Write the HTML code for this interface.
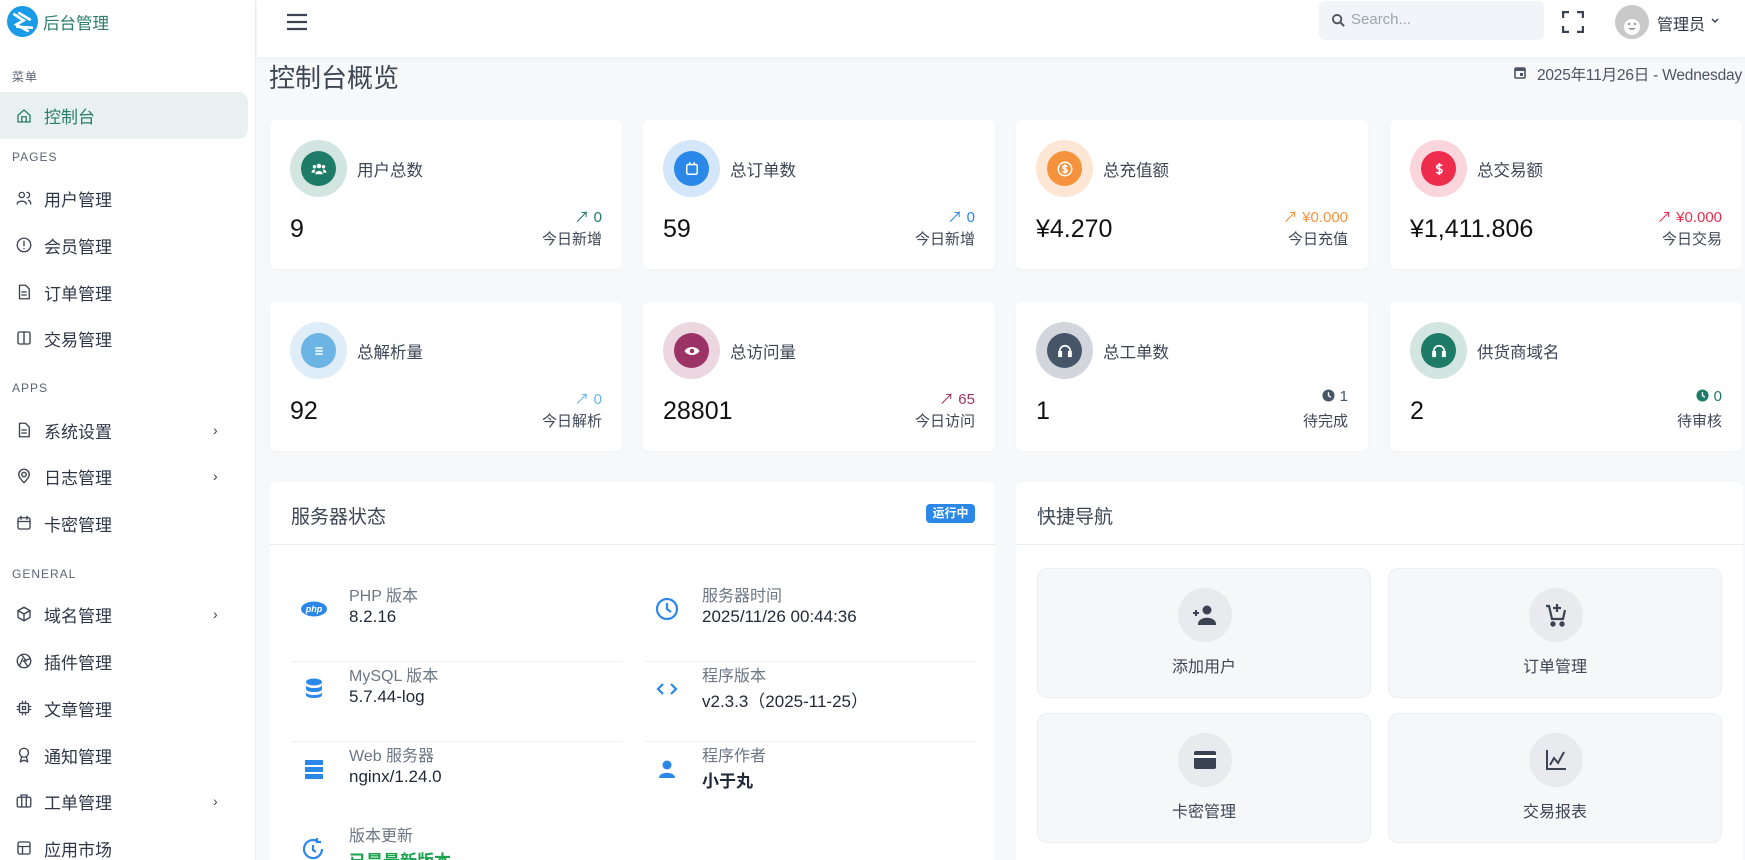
<!DOCTYPE html>
<html><head><meta charset="utf-8"><style>
*{margin:0;padding:0;box-sizing:border-box}
html{overflow:hidden;width:1745px;height:860px}
body{width:1745px;height:860px;overflow:hidden;background:#f7f8fa;font-family:"Liberation Sans","Noto Sans CJK SC",sans-serif;color:#334155;position:relative}
.a{position:absolute}
.sb{left:0;top:0;width:256px;height:860px;background:#fff;border-right:1px solid #eef0f3}
.sec{position:absolute;left:12px;font-size:12px;letter-spacing:1px;color:#5b6475}
.it{position:absolute;left:0;width:248px;height:46px;display:flex;align-items:center;font-size:17px;color:#2d3748}
.it svg{position:absolute;left:15px;width:18px;height:18px;fill:none;stroke:#3b4252;stroke-width:1.8;stroke-linecap:round;stroke-linejoin:round}
.it span{position:absolute;left:44px}
.it .ch{position:absolute;left:213px;font-size:14px;color:#3b4252}
.hd{left:257px;top:0;width:1488px;height:57px;background:#fff;box-shadow:0 2px 6px rgba(0,0,0,.04)}
.card{position:absolute;width:352px;height:149px;background:#fff;border-radius:6px;box-shadow:0 1px 3px rgba(0,0,0,.03)}
.oc{position:absolute;left:20px;top:20px;width:57px;height:57px;border-radius:50%}
.ic{position:absolute;left:11px;top:11px;width:35px;height:35px;border-radius:50%;display:flex;align-items:center;justify-content:center}
.ic svg{width:18px;height:18px}
.lb{position:absolute;left:87px;top:37px;font-size:16.5px;color:#3d4655}
.vl{position:absolute;left:20px;top:95px;font-size:25px;color:#111}
.st{position:absolute;right:20px;top:86px;font-size:15px;text-align:right;white-space:nowrap}
.st svg{vertical-align:-1px}
.st2{position:absolute;right:20px;top:108px;font-size:15px;color:#3d4655}
.panel{position:absolute;top:482px;height:378px;background:#fff;border-radius:6px 6px 0 0}
.ph{position:absolute;left:0;top:0;width:100%;height:63px;border-bottom:1px solid #e9ecef}
.ph span{position:absolute;left:21px;top:20px;font-size:19px;color:#3d4655}
.row{position:absolute;width:331px;height:80px}
.row .l{position:absolute;left:58px;top:0;font-size:16px;color:#6b7785}
.row .v{position:absolute;left:58px;top:25px;font-size:17px;color:#1f2937}
.row svg{position:absolute;left:10px;top:14px;width:26px;height:26px}
.tile{position:absolute;width:334px;height:130px;background:#f6f7f9;border:1px solid #eceef1;border-radius:10px}
.tile .c{position:absolute;left:140px;top:19px;width:54px;height:54px;border-radius:50%;background:#e8eaed;display:flex;align-items:center;justify-content:center}
.tile .t{position:absolute;left:0;width:100%;top:84px;text-align:center;font-size:16px;color:#3d4655}
</style></head><body>
<div class="a sb">
 <svg class="a" style="left:7px;top:6px" width="31" height="31" viewBox="0 0 30 30"><circle cx="15" cy="15" r="15" fill="#1a9be8"/><path d="M7 8 L16 14 L9 18 L20 24 M12 7 L22 13 M10 20 L24 21" stroke="#fff" stroke-width="2.6" fill="none" stroke-linecap="round"/></svg>
 <div class="a" style="left:43px;top:10px;font-size:16.5px;color:#2a7d6a">后台管理</div>
 <div class="sec" style="top:68px">菜单</div>
 <div class="it" style="top:92px;height:47px;background:#e8f1ef;border-radius:0 10px 10px 0;color:#2a7d6a"><svg viewBox="0 0 24 24" style="stroke:#2a7d6a"><path d="M4 11 L12 4 L20 11 V20 H4 Z M9 20 V13 H15 V20"/></svg><span>控制台</span></div>
 <div class="sec" style="top:150px">PAGES</div>
 <div class="it" style="top:175px"><svg viewBox="0 0 24 24"><circle cx="9" cy="8" r="3.5"/><path d="M3 20 C3 15 15 15 15 20 M16 4.5 A3.5 3.5 0 0 1 16 11.5 M18 15 C20 16 21 18 21 20"/></svg><span>用户管理</span></div>
 <div class="it" style="top:222px"><svg viewBox="0 0 24 24"><circle cx="12" cy="12" r="9"/><path d="M12 7 V13 M12 16.5 V17"/></svg><span>会员管理</span></div>
 <div class="it" style="top:269px"><svg viewBox="0 0 24 24"><path d="M6 3 H14 L19 8 V21 H6 Z M9 12 H15 M9 16 H15"/></svg><span>订单管理</span></div>
 <div class="it" style="top:315px"><svg viewBox="0 0 24 24"><rect x="4" y="4" width="16" height="16" rx="2"/><path d="M12 4 V20"/></svg><span>交易管理</span></div>
 <div class="sec" style="top:381px">APPS</div>
 <div class="it" style="top:407px"><svg viewBox="0 0 24 24"><path d="M6 3 H14 L19 8 V21 H6 Z M9 12 H15 M9 16 H15"/></svg><span>系统设置</span><span class="ch">›</span></div>
 <div class="it" style="top:453px"><svg viewBox="0 0 24 24"><circle cx="12" cy="10" r="3"/><path d="M12 21 C7 16 5 13 5 10 A7 7 0 0 1 19 10 C19 13 17 16 12 21Z"/></svg><span>日志管理</span><span class="ch">›</span></div>
 <div class="it" style="top:500px"><svg viewBox="0 0 24 24"><rect x="4" y="5" width="16" height="15" rx="2"/><path d="M4 10 H20 M8 3 V7 M16 3 V7"/></svg><span>卡密管理</span></div>
 <div class="sec" style="top:567px">GENERAL</div>
 <div class="it" style="top:591px"><svg viewBox="0 0 24 24"><path d="M12 3 L20 7.5 V16.5 L12 21 L4 16.5 V7.5 Z M4 7.5 L12 12 L20 7.5 M12 12 V21"/></svg><span>域名管理</span><span class="ch">›</span></div>
 <div class="it" style="top:638px"><svg viewBox="0 0 24 24"><circle cx="12" cy="12" r="9"/><path d="M9 4 L15 12 M20 9 L11 12 M17 19 L12 12 M6 18 L10 9"/></svg><span>插件管理</span></div>
 <div class="it" style="top:685px"><svg viewBox="0 0 24 24"><rect x="6" y="6" width="12" height="12" rx="1"/><rect x="10" y="10" width="4" height="4"/><path d="M3 10 H6 M3 14 H6 M18 10 H21 M18 14 H21 M10 3 V6 M14 3 V6 M10 18 V21 M14 18 V21"/></svg><span>文章管理</span></div>
 <div class="it" style="top:732px"><svg viewBox="0 0 24 24"><circle cx="12" cy="9" r="6"/><path d="M9 14 L7 21 L12 19 L17 21 L15 14"/></svg><span>通知管理</span></div>
 <div class="it" style="top:778px"><svg viewBox="0 0 24 24"><rect x="3" y="7" width="18" height="13" rx="2"/><path d="M8 7 V4 H16 V7 M9 7 V20 M15 7 V20"/></svg><span>工单管理</span><span class="ch">›</span></div>
 <div class="it" style="top:825px"><svg viewBox="0 0 24 24"><rect x="4" y="4" width="16" height="16" rx="2"/><path d="M4 10 H20 M10 10 V20"/></svg><span>应用市场</span></div>
</div>

<div class="a hd">
 <svg class="a" style="left:29px;top:13px" width="22" height="18" viewBox="0 0 22 18"><path d="M1 2 H21 M1 9 H21 M1 16 H21" stroke="#3b4252" stroke-width="2.2"/></svg>
 <div class="a" style="left:1062px;top:1px;width:225px;height:39px;background:#f1f5f9;border-radius:6px">
  <svg class="a" style="left:12px;top:12px" width="15" height="15" viewBox="0 0 16 16"><circle cx="6.5" cy="6.5" r="4.5" stroke="#4b5563" stroke-width="2" fill="none"/><path d="M10 10 L14 14" stroke="#4b5563" stroke-width="2.2"/></svg>
  <div class="a" style="left:32px;top:10px;font-size:15px;color:#9aa3ae">Search...</div>
 </div>
 <svg class="a" style="left:1305px;top:11px" width="22" height="22" viewBox="0 0 22 22"><path d="M1 7 V1 H7 M15 1 H21 V7 M21 15 V21 H15 M7 21 H1 V15" stroke="#3b4252" stroke-width="2.4" fill="none"/></svg>
 <svg class="a" style="left:1358px;top:5px" width="34" height="34" viewBox="0 0 34 34"><circle cx="17" cy="17" r="17" fill="#c9c9c9"/><circle cx="17" cy="22" r="8" fill="#fff"/><circle cx="14" cy="19" r="1.2" fill="#999"/><circle cx="20" cy="19" r="1.2" fill="#999"/><path d="M13 23 Q17 27 21 23Z" fill="#999"/></svg>
 <div class="a" style="left:1400px;top:11px;font-size:16px;color:#2d3748">管理员</div>
 <svg class="a" style="left:1453px;top:17px" width="10" height="8" viewBox="0 0 10 8"><path d="M2 2 L5 5 L8 2" stroke="#3b4252" stroke-width="1.5" fill="none"/></svg>
</div>

<div class="a" style="left:269px;top:58px;font-size:26px;color:#3d4655">控制台概览</div>
<svg class="a" style="left:1514px;top:66px" width="12" height="13" viewBox="0 0 12 13"><rect x="1" y="2" width="10" height="10" rx="1" fill="none" stroke="#4b5563" stroke-width="1.6"/><rect x="1" y="2" width="10" height="3" fill="#4b5563"/><rect x="6" y="7" width="3" height="3" fill="#4b5563"/></svg>
<div class="a" style="right:3px;top:63px;font-size:15.5px;color:#4b5563;white-space:nowrap;letter-spacing:-0.2px">2025年11月26日 - Wednesday</div>

<!-- cards row 1 -->
<div class="card" style="left:270px;top:120px"><div class="oc" style="background:#d2e5e1"><div class="ic" style="background:#1e7b68"><svg viewBox="0 0 24 24" fill="#fff"><circle cx="12" cy="8" r="3"/><circle cx="6" cy="9" r="2.3"/><circle cx="18" cy="9" r="2.3"/><path d="M7 19 C7 13 17 13 17 19Z M2 17 C2 13 6 12 7 13 L6 17Z M22 17 C22 13 18 12 17 13 L18 17Z"/></svg></div></div><div class="lb">用户总数</div><div class="vl">9</div><div class="st" style="color:#1e7b68">↗ 0</div><div class="st2">今日新增</div></div>
<div class="card" style="left:643px;top:120px"><div class="oc" style="background:#d3e6fa"><div class="ic" style="background:#2b88e8"><svg viewBox="0 0 24 24" fill="none" stroke="#fff" stroke-width="2"><rect x="5" y="6" width="14" height="13" rx="2"/><path d="M9 3 V7 M15 3 V7"/></svg></div></div><div class="lb">总订单数</div><div class="vl">59</div><div class="st" style="color:#2b88e8">↗ 0</div><div class="st2">今日新增</div></div>
<div class="card" style="left:1016px;top:120px"><div class="oc" style="background:#fde6d3"><div class="ic" style="background:#f5923e"><svg viewBox="0 0 24 24" fill="none" stroke="#fff" stroke-width="2"><circle cx="12" cy="12" r="9"/><path d="M15 9 C14 7 9 7 9 10 C9 13 15 11 15 14 C15 17 10 17 9 15 M12 5.5 V18.5"/></svg></div></div><div class="lb">总充值额</div><div class="vl">¥4.270</div><div class="st" style="color:#f5923e">↗ ¥0.000</div><div class="st2">今日充值</div></div>
<div class="card" style="left:1390px;top:120px"><div class="oc" style="background:#fbd5dc"><div class="ic" style="background:#ee2d4d"><svg viewBox="0 0 24 24" fill="none" stroke="#fff" stroke-width="2.2"><path d="M16 8 C15 6 9 6 9 9.5 C9 13 16 11 16 14.5 C16 18 10 18 8.5 16 M12.5 4 V20"/></svg></div></div><div class="lb">总交易额</div><div class="vl">¥1,411.806</div><div class="st" style="color:#ee2d4d">↗ ¥0.000</div><div class="st2">今日交易</div></div>

<!-- cards row 2 -->
<div class="card" style="left:270px;top:302px"><div class="oc" style="background:#deedf8"><div class="ic" style="background:#6cb4e4"><svg viewBox="0 0 24 24" stroke="#fff" stroke-width="2"><path d="M7 8 H17 M7 12 H17 M7 16 H17"/></svg></div></div><div class="lb">总解析量</div><div class="vl">92</div><div class="st" style="color:#6cb4e4">↗ 0</div><div class="st2">今日解析</div></div>
<div class="card" style="left:643px;top:302px"><div class="oc" style="background:#ecd6df"><div class="ic" style="background:#9b3366"><svg viewBox="0 0 24 24"><path d="M2 12 C6 5 18 5 22 12 C18 19 6 19 2 12Z" fill="#fff"/><circle cx="12" cy="12" r="3" fill="#9b3366"/></svg></div></div><div class="lb">总访问量</div><div class="vl">28801</div><div class="st" style="color:#9b3366">↗ 65</div><div class="st2">今日访问</div></div>
<div class="card" style="left:1016px;top:302px"><div class="oc" style="background:#d2d6dc"><div class="ic" style="background:#475569"><svg viewBox="0 0 24 24" fill="none" stroke="#fff" stroke-width="2.2"><path d="M5 17 V12 A7 7 0 0 1 19 12 V17"/><rect x="4" y="13" width="3" height="6" fill="#fff"/><rect x="17" y="13" width="3" height="6" fill="#fff"/></svg></div></div><div class="lb">总工单数</div><div class="vl">1</div><div class="st" style="color:#475569"><svg width="13" height="13" viewBox="0 0 14 14"><circle cx="7" cy="7" r="6.5" fill="#475569"/><path d="M7 3.5 V7 L9.5 9" stroke="#fff" stroke-width="1.5" fill="none"/></svg> 1</div><div class="st2">待完成</div></div>
<div class="card" style="left:1390px;top:302px"><div class="oc" style="background:#d2e5e1"><div class="ic" style="background:#1e7b68"><svg viewBox="0 0 24 24" fill="none" stroke="#fff" stroke-width="2.2"><path d="M5 17 V12 A7 7 0 0 1 19 12 V17"/><rect x="4" y="13" width="3" height="6" fill="#fff"/><rect x="17" y="13" width="3" height="6" fill="#fff"/></svg></div></div><div class="lb">供货商域名</div><div class="vl">2</div><div class="st" style="color:#1e7b68"><svg width="13" height="13" viewBox="0 0 14 14"><circle cx="7" cy="7" r="6.5" fill="#1e7b68"/><path d="M7 3.5 V7 L9.5 9" stroke="#fff" stroke-width="1.5" fill="none"/></svg> 0</div><div class="st2">待审核</div></div>

<!-- server panel -->
<div class="panel" style="left:270px;width:725px">
 <div class="ph"><span>服务器状态</span><div class="a" style="left:656px;top:22px;width:49px;height:19px;background:#2b88e8;border-radius:4px;color:#fff;font-size:12px;font-weight:bold;text-align:center;line-height:19px">运行中</div></div>
 <div class="row" style="left:21px;top:100px;border-bottom:1px solid #eef0f2"><svg viewBox="0 0 26 26"><ellipse cx="13" cy="13" rx="13" ry="7.5" fill="#2b88e8"/><text x="13" y="16" font-size="9" font-style="italic" font-weight="bold" fill="#fff" text-anchor="middle" font-family="Liberation Sans">php</text></svg><div class="l">PHP 版本</div><div class="v">8.2.16</div></div>
 <div class="row" style="left:374px;top:100px;border-bottom:1px solid #eef0f2"><svg viewBox="0 0 26 26" fill="none" stroke="#2b88e8" stroke-width="2.2"><circle cx="13" cy="13" r="10"/><path d="M13 7 V13 L17 16"/></svg><div class="l">服务器时间</div><div class="v">2025/11/26 00:44:36</div></div>
 <div class="row" style="left:21px;top:180px;border-bottom:1px solid #eef0f2"><svg viewBox="0 0 26 26" fill="#2b88e8"><ellipse cx="13" cy="6" rx="8" ry="3.5"/><path d="M5 9 C5 13 21 13 21 9 V13 C21 17 5 17 5 13Z M5 16 C5 20 21 20 21 16 V19 C21 23 5 23 5 19Z"/></svg><div class="l">MySQL 版本</div><div class="v">5.7.44-log</div></div>
 <div class="row" style="left:374px;top:180px;border-bottom:1px solid #eef0f2"><svg viewBox="0 0 26 26" fill="none" stroke="#2b88e8" stroke-width="2.2"><path d="M9 8 L4 13 L9 18 M17 8 L22 13 L17 18"/></svg><div class="l">程序版本</div><div class="v">v2.3.3（2025-11-25）</div></div>
 <div class="row" style="left:21px;top:260px"><svg viewBox="0 0 26 26" fill="#2b88e8"><rect x="4" y="4" width="18" height="5"/><rect x="4" y="11" width="18" height="5"/><rect x="4" y="18" width="18" height="5"/></svg><div class="l">Web 服务器</div><div class="v">nginx/1.24.0</div></div>
 <div class="row" style="left:374px;top:260px"><svg viewBox="0 0 26 26" fill="#2b88e8"><circle cx="13" cy="9" r="4.5"/><path d="M5 22 C5 15 21 15 21 22Z"/></svg><div class="l">程序作者</div><div class="v" style="font-weight:bold">小于丸</div></div>
 <div class="row" style="left:21px;top:340px"><svg viewBox="0 0 26 26" fill="none" stroke="#2b88e8" stroke-width="2.2"><path d="M21 13 A9 9 0 1 1 16 5 M16 2 V6 H20"/><path d="M12 9 V14 L15 16"/></svg><div class="l">版本更新</div><div class="v" style="color:#16a34a;font-weight:bold">已是最新版本</div></div>
</div>

<!-- quick nav -->
<div class="panel" style="left:1016px;width:727px">
 <div class="ph"><span>快捷导航</span></div>
 <div class="tile" style="left:21px;top:86px"><div class="c"><svg width="26" height="22" viewBox="0 0 26 22" fill="#3b4252"><circle cx="15" cy="6" r="4.5"/><path d="M7 20 C7 13 23 13 23 20Z M1 9 H7 M4 6 V12" stroke="#3b4252" stroke-width="2"/></svg></div><div class="t">添加用户</div></div>
 <div class="tile" style="left:372px;top:86px"><div class="c"><svg width="24" height="26" viewBox="0 0 24 26" fill="none" stroke="#3b4252" stroke-width="2.2"><path d="M2 4 H5 L8 17 H19 L21 8 M13 2 V10 M9 6 H17"/><circle cx="9" cy="22" r="1.6" fill="#3b4252"/><circle cx="18" cy="22" r="1.6" fill="#3b4252"/></svg></div><div class="t">订单管理</div></div>
 <div class="tile" style="left:21px;top:231px"><div class="c"><svg width="22" height="18" viewBox="0 0 22 18"><rect x="0" y="0" width="22" height="18" rx="2" fill="#3b4252"/><rect x="0" y="4" width="22" height="3" fill="#fff"/></svg></div><div class="t">卡密管理</div></div>
 <div class="tile" style="left:372px;top:231px"><div class="c"><svg width="22" height="22" viewBox="0 0 22 22" fill="none" stroke="#3b4252" stroke-width="2"><path d="M2 1 V20 H21 M5 16 L9 9 L13 14 L19 3"/></svg></div><div class="t">交易报表</div></div>
</div>
</body></html>
